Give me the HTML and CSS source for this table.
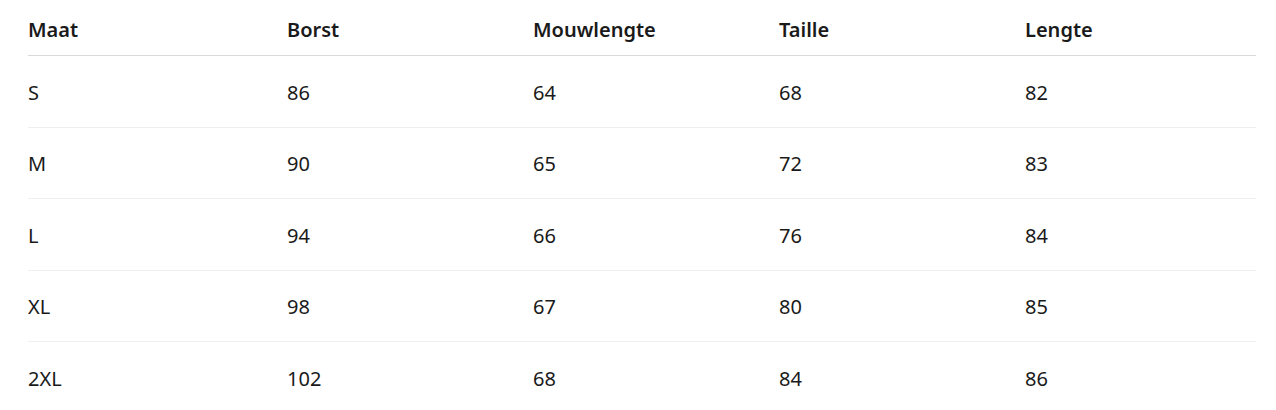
FILE: index.html
```html
<!DOCTYPE html>
<html lang="nl">
<head>
<meta charset="utf-8">
<link rel="stylesheet" href="styles.css">
</head>
<body>
<table class="size-table">
  <colgroup>
    <col class="c1"><col class="c2"><col class="c3"><col class="c4"><col class="c5">
  </colgroup>
  <thead>
    <tr><th>Maat</th><th>Borst</th><th>Mouwlengte</th><th>Taille</th><th>Lengte</th></tr>
  </thead>
  <tbody>
    <tr><td>S</td><td>86</td><td>64</td><td>68</td><td>82</td></tr>
    <tr><td>M</td><td>90</td><td>65</td><td>72</td><td>83</td></tr>
    <tr><td>L</td><td>94</td><td>66</td><td>76</td><td>84</td></tr>
    <tr><td>XL</td><td>98</td><td>67</td><td>80</td><td>85</td></tr>
    <tr><td>2XL</td><td>102</td><td>68</td><td>84</td><td>86</td></tr>
  </tbody>
</table>
</body>
</html>
```
FILE: styles.css
```css
html, body {
  margin: 0;
  padding: 0;
  background: #ffffff;
}
body {
  padding: 0 20px 0 28px;
  font-family: "Noto Sans", "Open Sans", sans-serif;
  color: #1a1a1a;
}
.size-table {
  width: 1228px;
  border-collapse: collapse;
  table-layout: fixed;
  font-size: 20px;
  line-height: 30px;
}
.c1 { width: 259px; }
.c2 { width: 246px; }
.c3 { width: 246px; }
.c4 { width: 246px; }
.c5 { width: 231px; }
.size-table th {
  text-align: left;
  font-weight: 600;
  padding: 15px 0 10px 0;
  border-bottom: 1px solid #d9d9d9;
}
.size-table td {
  text-align: left;
  font-weight: 400;
  padding: 21.5px 0 19px 0;
  border-bottom: 1px solid #efefef;
}
.size-table tbody tr:last-child td {
  border-bottom: none;
}
```
